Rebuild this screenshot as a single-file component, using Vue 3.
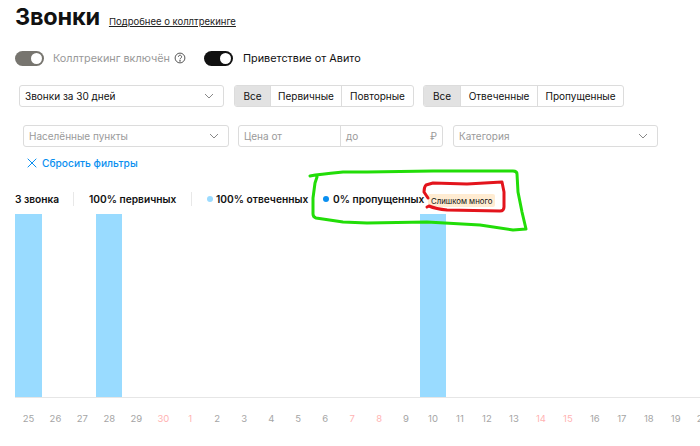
<script setup>
const reds = new Set([30, 1, 7, 8, 14, 15])
const bars = new Set([25, 28, 10])
const days = [25, 26, 27, 28, 29, 30, ...Array.from({ length: 20 }, (_, i) => i + 1)].map((n) => ({
  n,
  red: reds.has(n),
  bar: bars.has(n),
}))
</script>

<template>
  <div class="page">
    <header class="head">
      <h1>Звонки</h1>
      <a class="more">Подробнее о коллтрекинге</a>
    </header>

    <div class="toggles">
      <span class="toggle grey"><i></i></span>
      <span class="tlabel muted">Коллтрекинг включён</span>
      <svg class="help" width="12" height="12" viewBox="0 0 12 12" fill="none" stroke="#555" stroke-width="1">
        <circle cx="6" cy="6" r="4.9" />
        <path d="M4.4 4.8a1.6 1.6 0 1 1 2.5 1.3c-.6.4-.9.6-.9 1.3" />
        <circle cx="6" cy="8.9" r=".4" fill="#555" />
      </svg>
      <span class="toggle dark"><i></i></span>
      <span class="tlabel">Приветствие от Авито</span>
    </div>

    <div class="row r1">
      <div class="select s1">
        <span>Звонки за 30 дней</span>
        <svg class="chev" width="10" height="6" viewBox="0 0 10 6" fill="none" stroke="#888" stroke-width="1"><path d="M1 1l4 4 4-4" /></svg>
      </div>
      <div class="seg g1">
        <span class="on w35">Все</span><span class="w71">Первичные</span><span class="w72">Повторные</span>
      </div>
      <div class="seg g2">
        <span class="on w36">Все</span><span class="w78">Отвеченные</span><span class="w87">Пропущенные</span>
      </div>
    </div>

    <div class="row r2">
      <div class="select s2 ph">
        <span>Населённые пункты</span>
        <svg class="chev" width="10" height="6" viewBox="0 0 10 6" fill="none" stroke="#888" stroke-width="1"><path d="M1 1l4 4 4-4" /></svg>
      </div>
      <div class="range ph">
        <span class="from">Цена от</span>
        <span class="to"><span>до</span><span class="rub">₽</span></span>
      </div>
      <div class="select s3 ph">
        <span>Категория</span>
        <svg class="chev" width="10" height="6" viewBox="0 0 10 6" fill="none" stroke="#888" stroke-width="1"><path d="M1 1l4 4 4-4" /></svg>
      </div>
    </div>

    <div class="reset">
      <svg width="10" height="10" viewBox="0 0 10 10" fill="none" stroke="#0a8ff0" stroke-width="1"><path d="M.7.7l8.6 8.6M9.3.7L.7 9.3" /></svg>
      <span>Сбросить фильтры</span>
    </div>

    <div class="stats">
      <b class="st1">3 звонка</b>
      <span class="div"></span>
      <b class="st2">100% первичных</b>
      <span class="div"></span>
      <span class="dot light"></span>
      <b class="st3">100% отвеченных</b>
      <span class="dot blue"></span>
      <b class="st4">0% пропущенных</b>
      <span class="badge">Слишком много</span>
    </div>

    <div class="chart">
      <div v-for="d in days" :key="d.n" class="col">
        <div class="track"><div v-if="d.bar" class="bar"></div></div>
        <span class="day" :class="{ red: d.red }">{{ d.n }}</span>
      </div>
    </div>

    <svg class="scribble" width="700" height="446" viewBox="0 0 700 446" fill="none" stroke-linecap="round" stroke-linejoin="round">
      <path stroke="#22dd08" stroke-width="3" d="M310 176 C320 174 332 173 343 172 L367 172 L433 171 L513 171 Q517 171 517 174 L518 192 L522 212 L526 229 L513 230 L480 225 L427 222 L367 223 L343 222 L316 218 Q313 217 313 214 L313 198 L315 183 L317 177" />
      <path stroke="#e3141c" stroke-width="3" d="M427 207 L429 206 Q436 209 447 210 L500 211 Q504 211 504 207 L504 192 L502 182 L467 184 L433 183 L426 185 Q424 187 424 192 L428 198" />
    </svg>
  </div>
</template>

<style>
html,
body {
  margin: 0;
  background: #fff;
}
</style>

<style scoped>
.page {
  position: relative;
  width: 700px;
  height: 446px;
  overflow: hidden;
  background: #fff;
  color: #111;
  font-family: Inter, "Noto Sans", sans-serif;
  font-size: 10px;
}
.head {
  display: flex;
  align-items: baseline;
  height: 38px;
  padding-left: 15px;
  box-sizing: border-box;
}
h1 {
  margin: 0;
  font-size: 23.5px;
  line-height: 34px;
  font-weight: 700;
  letter-spacing: -0.2px;
}
.more {
  margin-left: 9px;
  font-size: 9.5px;
  text-decoration: underline;
  color: #222;
}
.toggles {
  display: flex;
  align-items: center;
  height: 16px;
  margin-top: 12px;
  padding-left: 15px;
}
.toggle {
  display: flex;
  justify-content: flex-end;
  align-items: center;
  width: 29px;
  height: 15px;
  padding-right: 2px;
  box-sizing: border-box;
  border-radius: 8px;
}
.toggle i {
  width: 11px;
  height: 11px;
  border-radius: 50%;
  background: #fff;
}
.grey {
  background: #77756f;
}
.dark {
  background: #111;
  margin-left: 18px;
}
.tlabel {
  margin-left: 9px;
  font-size: 10.85px;
}
.dark + .tlabel {
  margin-left: 10px;
}
.muted {
  color: #999;
}
.help {
  margin-left: 4px;
}
.row {
  display: flex;
  height: 22px;
}
.r1 {
  margin-top: 19px;
  padding-left: 19px;
}
.r2 {
  margin-top: 18px;
  padding-left: 23px;
}
.select {
  display: flex;
  justify-content: space-between;
  align-items: center;
  box-sizing: border-box;
  height: 22px;
  padding: 0 9px 0 5px;
  border: 1px solid #dcdcdc;
  border-radius: 3px;
}
.s1 {
  width: 205px;
}
.s2 {
  width: 206px;
}
.s3 {
  width: 205px;
  margin-left: 10px;
}
.ph {
  color: #9a9a9a;
}
.seg {
  display: flex;
  box-sizing: border-box;
  height: 22px;
  border: 1px solid #dcdcdc;
  border-radius: 3px;
  overflow: hidden;
}
.seg span {
  display: flex;
  align-items: center;
  justify-content: center;
  box-sizing: border-box;
  border-left: 1px solid #dcdcdc;
}
.seg span:first-child {
  border-left: 0;
}
.seg .on {
  background: #e2e2e2;
}
.g1 {
  margin-left: 10px;
}
.g2 {
  margin-left: 9px;
}
.w35 {
  width: 35px;
}
.w36 {
  width: 36px;
}
.w71 {
  width: 71px;
}
.w72 {
  width: 72px;
}
.w78 {
  width: 77px;
}
.w87 {
  width: 86px;
}
.range {
  display: flex;
  box-sizing: border-box;
  width: 205px;
  height: 22px;
  margin-left: 9px;
  border: 1px solid #dcdcdc;
  border-radius: 3px;
}
.from {
  display: flex;
  align-items: center;
  box-sizing: border-box;
  width: 102px;
  padding-left: 5px;
  border-right: 1px solid #dcdcdc;
}
.to {
  display: flex;
  flex: 1;
  align-items: center;
  justify-content: space-between;
  padding: 0 5px;
}
.rub {
  font-size: 10px;
}
.reset {
  display: flex;
  align-items: center;
  gap: 5px;
  height: 14px;
  margin-top: 9px;
  padding-left: 27px;
  color: #0a8ff0;
  font-size: 10.2px;
  font-weight: 500;
}
.stats {
  display: flex;
  align-items: center;
  height: 16px;
  margin-top: 21px;
  padding-left: 15px;
  font-size: 10.2px;
}
.stats b {
  font-weight: 600;
  white-space: nowrap;
}
.st1 {
  width: 58px;
}
.st2 {
  width: 102px;
  margin-left: 15px;
}
.st3 {
  width: 92px;
}
.st4 {
  width: 91px;
}
.div {
  width: 1px;
  height: 14px;
  background: #e8e8e8;
}
.dot {
  width: 6px;
  height: 6px;
  border-radius: 50%;
  margin-right: 3px;
}
.light {
  margin-left: 15px;
  background: #9bdbff;
}
.blue {
  margin-left: 15px;
  margin-right: 4px;
  background: #0a8ff0;
}
.badge {
  display: flex;
  align-items: center;
  height: 13px;
  margin-top: 3px;
  margin-left: 4px;
  padding: 0 3px;
  border-radius: 2px;
  background: #ffecd2;
  font-size: 7.8px;
  white-space: nowrap;
}
.chart {
  display: flex;
  margin-top: 7px;
  margin-left: 15px;
}
.col {
  display: flex;
  flex: 0 0 26.97px;
  flex-direction: column;
  align-items: center;
}
.track {
  display: flex;
  align-items: flex-end;
  box-sizing: border-box;
  width: 100%;
  height: 184px;
  border-bottom: 1px solid #e6e6e6;
}
.bar {
  width: 26.5px;
  height: 183px;
  background: #99dbff;
}
.day {
  margin-top: 15px;
  color: #a5a5a5;
  font-size: 9.5px;
}
.red {
  color: #ffb3b3;
}
.scribble {
  position: absolute;
  top: 0;
  left: 0;
  pointer-events: none;
}
</style>
